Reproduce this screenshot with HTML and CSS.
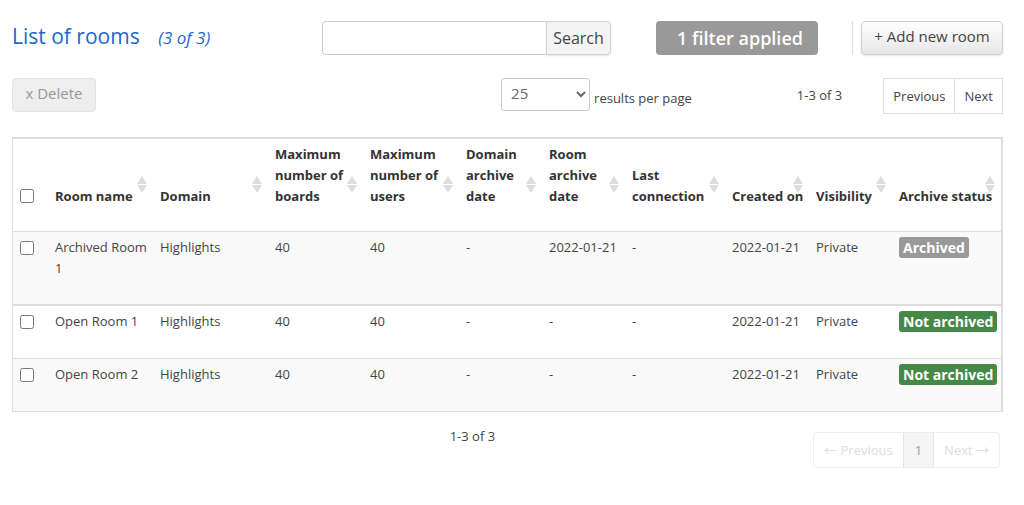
FILE: index.html
```html
<!DOCTYPE html>
<html lang="en">
<head>
    <meta charset="UTF-8">
    <meta name="viewport" content="width=device-width, initial-scale=1.0">
    <title>List of rooms</title>
    <link rel="stylesheet" href="styles.css">
</head>
<body>
    <div class="container">
        <div class="header">
            <h1>List of rooms <em class="count">(3 of 3)</em></h1>
            <form class="search-form">
                <input type="text" class="search-input" aria-label="Search rooms">
                <button type="button" class="search-btn">Search</button>
            </form>
            <button type="button" class="filter-btn">1 filter applied</button>
            <div class="add-section">
                <button type="button" class="add-btn">+ Add new room</button>
            </div>
        </div>

        <div class="toolbar">
            <button type="button" class="delete-btn" disabled>x Delete</button>
            <div class="page-size">
                <select id="page_size">
                    <option>10</option>
                    <option selected>25</option>
                    <option>50</option>
                </select>
                <label for="page_size">results per page</label>
            </div>
            <span class="range">1-3 of 3</span>
            <nav class="pager" aria-label="Pages">
                <a href="#">Previous</a>
                <a href="#">Next</a>
            </nav>
        </div>

        <table class="rooms-table">
            <colgroup>
                <col class="col-check">
                <col class="col-room">
                <col class="col-domain">
                <col class="col-boards">
                <col class="col-users">
                <col class="col-date">
                <col class="col-date">
                <col class="col-last">
                <col class="col-created">
                <col class="col-date">
                <col class="col-status">
            </colgroup>
            <thead>
                <tr>
                    <th><input type="checkbox" aria-label="Select all rooms"></th>
                    <th>Room name<span class="sort"></span></th>
                    <th>Domain<span class="sort"></span></th>
                    <th>Maximum number of boards<span class="sort"></span></th>
                    <th>Maximum number of users<span class="sort"></span></th>
                    <th>Domain archive date<span class="sort"></span></th>
                    <th>Room archive date<span class="sort"></span></th>
                    <th>Last connection<span class="sort"></span></th>
                    <th class="nowrap">Created on<span class="sort"></span></th>
                    <th>Visibility<span class="sort"></span></th>
                    <th class="nowrap">Archive status<span class="sort"></span></th>
                </tr>
            </thead>
            <tbody>
                <tr>
                    <td><input type="checkbox" aria-label="Select Archived Room 1"></td>
                    <td>Archived Room 1</td>
                    <td>Highlights</td>
                    <td>40</td>
                    <td>40</td>
                    <td>-</td>
                    <td class="nowrap">2022-01-21</td>
                    <td>-</td>
                    <td class="nowrap">2022-01-21</td>
                    <td>Private</td>
                    <td><span class="label">Archived</span></td>
                </tr>
                <tr>
                    <td><input type="checkbox" aria-label="Select Open Room 1"></td>
                    <td>Open Room 1</td>
                    <td>Highlights</td>
                    <td>40</td>
                    <td>40</td>
                    <td>-</td>
                    <td>-</td>
                    <td>-</td>
                    <td class="nowrap">2022-01-21</td>
                    <td>Private</td>
                    <td><span class="label label-success">Not archived</span></td>
                </tr>
                <tr>
                    <td><input type="checkbox" aria-label="Select Open Room 2"></td>
                    <td>Open Room 2</td>
                    <td>Highlights</td>
                    <td>40</td>
                    <td>40</td>
                    <td>-</td>
                    <td>-</td>
                    <td>-</td>
                    <td class="nowrap">2022-01-21</td>
                    <td>Private</td>
                    <td><span class="label label-success">Not archived</span></td>
                </tr>
            </tbody>
        </table>

        <div class="footer">
            <span class="range">1-3 of 3</span>
            <nav class="pagination" aria-label="Pagination">
                <a href="#">← Previous</a>
                <a href="#" class="active">1</a>
                <a href="#">Next →</a>
            </nav>
        </div>
    </div>
</body>
</html>
```
FILE: styles.css
```css
* {
    margin: 0;
    padding: 0;
    box-sizing: border-box;
}

body {
    font-family: "Open Sans", "Noto Sans CJK JP", sans-serif;
    font-size: 13px;
    line-height: 21px;
    color: #444;
    background: #fff;
}

button,
input,
select {
    font-family: inherit;
    color: inherit;
}

a {
    color: inherit;
    text-decoration: none;
}

.container {
    padding: 20px 21px 20px 12px;
}

.header {
    display: flex;
    align-items: center;
    height: 36px;
}

.header h1 {
    flex: 1;
    padding-bottom: 3px;
    font-size: 21px;
    font-weight: normal;
    color: #1f66cc;
}

.count {
    margin-left: 13px;
    font-size: 17px;
}

.search-form {
    display: flex;
    height: 34px;
}

.search-input {
    width: 225px;
    padding: 0 8px;
    border: 1px solid #ccc;
    border-radius: 4px 0 0 4px;
    font-size: 16px;
}

.search-btn {
    width: 65px;
    margin-left: -1px;
    border: 1px solid #d2d2d2;
    border-radius: 0 4px 4px 0;
    background: #f4f4f4;
    font-size: 16px;
    box-shadow: 0 1px 2px rgba(0,0,0,0.1);
}

.filter-btn {
    width: 162px;
    height: 34px;
    margin-left: 45px;
    padding-left: 6px;
    border: none;
    border-radius: 4px;
    background: #999;
    color: #fff;
    font-size: 18px;
    font-weight: 600;
}

.add-section {
    margin-left: 34px;
    padding-left: 8px;
    border-left: 1px solid #ddd;
}

.add-btn {
    display: block;
    width: 142px;
    height: 34px;
    padding-bottom: 4px;
    border: 1px solid #ccc;
    border-radius: 4px;
    background: linear-gradient(#fff, #e6e6e6);
    font-size: 15px;
    box-shadow: 0 1px 2px rgba(0,0,0,0.1);
}

.toolbar {
    display: flex;
    align-items: flex-start;
    margin: 22px 0 23px;
}

.delete-btn {
    width: 84px;
    height: 34px;
    margin-right: auto;
    padding-bottom: 4px;
    border: 1px solid #e3e3e3;
    border-radius: 4px;
    background: #eee;
    color: #999;
    font-size: 15px;
}

.page-size {
    display: flex;
    align-items: center;
    gap: 4px;
    margin-right: 105px;
}

.page-size select {
    width: 89px;
    height: 33px;
    padding: 0 3px 3px 5px;
    border: 1px solid #ccc;
    border-radius: 3px;
    background: #fff;
    color: #666;
    font-size: 15px;
}

.page-size label {
    padding-top: 8px;
}

.toolbar .range {
    margin-right: 41px;
    line-height: 34px;
}

.pager {
    display: flex;
    border: 1px solid #ddd;
}

.pager a {
    padding: 0 9px;
    line-height: 34px;
}

.pager a + a {
    border-left: 1px solid #ddd;
}

.rooms-table {
    width: 100%;
    table-layout: fixed;
    border-collapse: separate;
    border-spacing: 0;
    border: 1px solid #ddd;
    border-top-width: 2px;
    border-right-width: 2px;
}

.col-check { width: 35px; }
.col-room { width: 105px; }
.col-domain { width: 115px; }
.col-boards { width: 95px; }
.col-users { width: 96px; }
.col-date { width: 83px; }
.col-last { width: 100px; }
.col-created { width: 84px; }
.col-status { width: 109px; }

.rooms-table th {
    position: relative;
    padding: 5px 2px 24px 7px;
    color: #333;
    font-weight: bold;
    text-align: left;
    vertical-align: bottom;
}

.rooms-table td {
    padding: 5px 2px 25px 7px;
    border-top: 1px solid #ddd;
    vertical-align: top;
}

.rooms-table tbody tr:nth-child(odd) td {
    background: #f9f9f9;
}

.rooms-table tbody tr:nth-child(2) td {
    border-top-width: 2px;
}

.nowrap {
    white-space: nowrap;
}

.rooms-table input {
    display: block;
    width: 14px;
    height: 14px;
    margin: 4px 0;
}

/* Up and down arrows */
.sort {
    position: absolute;
    top: 37px;
    right: 6px;
}

.sort::before,
.sort::after {
    content: "";
    display: block;
    border: 5px solid transparent;
}

.sort::before {
    border-top: none;
    border-bottom: 8px solid #ddd;
}

.sort::after {
    margin-top: 1px;
    border-bottom: none;
    border-top: 8px solid #ddd;
}

.label {
    display: inline-block;
    vertical-align: top;
    padding: 0 4px;
    border-radius: 3px;
    background: #999;
    color: #fff;
    font-size: 14px;
    font-weight: bold;
    white-space: nowrap;
}

.label-success {
    background: #468847;
}

.footer {
    display: flex;
    justify-content: flex-end;
    align-items: flex-start;
    margin-top: 20px;
    padding-right: 3px;
}

.footer .range {
    margin-right: 318px;
    margin-top: -6px;
}

.pagination {
    display: flex;
    border: 1px solid #eee;
    border-radius: 4px;
    color: #ddd;
}

.pagination a {
    padding: 0 10px;
    line-height: 34px;
}

.pagination .active {
    padding: 0 11px;
    border: 1px solid #e5e5e5;
    border-width: 0 1px;
    background: #f5f5f5;
    color: #999;
}
```
